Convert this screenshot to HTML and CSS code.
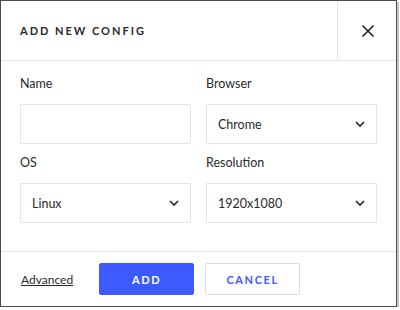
FILE: index.html
```html
<!DOCTYPE html>
<html lang="en">
<head>
  <meta charset="UTF-8">
  <title>Add New Config</title>
  <link rel="stylesheet" href="styles.css">
</head>
<body>
  <div class="dialog">
    <header class="dialog-head">
      <h1>ADD NEW CONFIG</h1>
      <button type="button" class="close" aria-label="Close">
        <svg width="14" height="14" viewBox="0 0 14 14"><path d="M1.5 1.5 L12.5 12.5 M12.5 1.5 L1.5 12.5" stroke="#222" stroke-width="1.6" fill="none"/></svg>
      </button>
    </header>

    <main class="dialog-body">
      <div class="field">
        <label for="name">Name</label>
        <input type="text" id="name">
      </div>
      <div class="field">
        <label>Browser</label>
        <div class="select"><span>Chrome</span><svg class="chev" width="10" height="6" viewBox="0 0 10 6"><path d="M1 1 L5 5 L9 1" stroke="#222" stroke-width="1.6" fill="none"/></svg></div>
      </div>
      <div class="field">
        <label>OS</label>
        <div class="select"><span>Linux</span><svg class="chev" width="10" height="6" viewBox="0 0 10 6"><path d="M1 1 L5 5 L9 1" stroke="#222" stroke-width="1.6" fill="none"/></svg></div>
      </div>
      <div class="field">
        <label>Resolution</label>
        <div class="select"><span>1920x1080</span><svg class="chev" width="10" height="6" viewBox="0 0 10 6"><path d="M1 1 L5 5 L9 1" stroke="#222" stroke-width="1.6" fill="none"/></svg></div>
      </div>
    </main>

    <footer class="dialog-foot">
      <a href="#" class="advanced">Advanced</a>
      <button type="button" class="btn btn-primary">ADD</button>
      <button type="button" class="btn btn-outline">CANCEL</button>
    </footer>
  </div>
</body>
</html>
```

FILE: styles.css
```css
body {
  margin: 0;
  padding: 0;
  background: #fff;
  font-family: 'Lato', sans-serif;
  color: #2a2a2a;
}

.dialog {
  width: 395px;
  height: 305px;
  border: 1px solid #4a4a4a;
  background: #fff;
  box-shadow: 2px 2px 0 #c8c8c8;
  display: flex;
  flex-direction: column;
}

.dialog-head {
  display: flex;
  height: 59px;
  border-bottom: 1px solid #e3e3ea;
}

.dialog-head h1 {
  flex: 1;
  margin: 0;
  padding-left: 19px;
  font-size: 11px;
  font-weight: 700;
  letter-spacing: 2px;
  line-height: 59px;
}

.close {
  width: 59px;
  border: none;
  border-left: 1px solid #e3e3ea;
  background: none;
  display: flex;
  align-items: center;
  justify-content: center;
  padding: 0 0 0 2px;
}

.dialog-body {
  display: grid;
  grid-template-columns: 171px 171px;
  column-gap: 15px;
  row-gap: 10px;
  padding: 14px 19px 28px;
  border-bottom: 1px solid #e3e3ea;
}

.field label {
  display: block;
  font-size: 12.5px;
  line-height: 18px;
  margin-bottom: 11px;
}

.field input,
.select {
  box-sizing: border-box;
  width: 100%;
  height: 40px;
  border: 1px solid #e3e3ea;
  border-radius: 1px;
  font-family: inherit;
  font-size: 12.5px;
  margin: 0;
}

.select {
  display: flex;
  align-items: center;
  justify-content: space-between;
  padding: 0 11px 0 11px;
}

.dialog-foot {
  display: flex;
  align-items: center;
  padding: 11px 0 11px 20px;
}

.advanced {
  color: #2a2a2a;
  font-size: 12px;
  text-decoration: underline;
  margin-right: 26px;
}

.btn {
  width: 95px;
  height: 32px;
  border-radius: 2px;
  font-family: inherit;
  font-size: 11px;
  font-weight: 700;
  letter-spacing: 1.6px;
  cursor: pointer;
}

.btn-primary {
  background: #3d5afe;
  border: 1px solid #3d5afe;
  color: #fff;
  margin-right: 11px;
}

.btn-outline {
  background: #fff;
  border: 1px solid #dcdce4;
  color: #3d5afe;
}
```
